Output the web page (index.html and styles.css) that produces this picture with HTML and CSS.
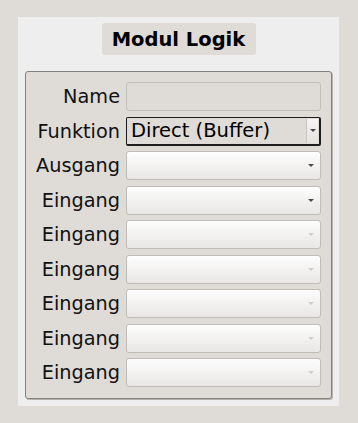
FILE: index.html
```html
<!DOCTYPE html>
<html lang="en">
<head>
  <meta charset="UTF-8">
  <meta name="viewport" content="width=device-width, initial-scale=1.0">
  <title>Modul Logik</title>
  <link rel="stylesheet" href="styles.css">
</head>
<body>
  <!-- Panel -->
  <div class="panel">
    <div class="title">Modul Logik</div>

    <!-- Form group -->
    <div class="group">
      <label class="label">Name</label>
      <div class="field flat"></div>

      <label class="label">Funktion</label>
      <div class="field combo active">
        <span class="value">Direct (Buffer)</span>
        <span class="drop"><span class="arrow"></span></span>
      </div>

      <label class="label">Ausgang</label>
      <div class="field combo"><span class="value"></span><span class="arrow"></span></div>

      <label class="label">Eingang</label>
      <div class="field combo"><span class="value"></span><span class="arrow"></span></div>

      <label class="label">Eingang</label>
      <div class="field combo disabled"><span class="value"></span><span class="arrow"></span></div>

      <label class="label">Eingang</label>
      <div class="field combo disabled"><span class="value"></span><span class="arrow"></span></div>

      <label class="label">Eingang</label>
      <div class="field combo disabled"><span class="value"></span><span class="arrow"></span></div>

      <label class="label">Eingang</label>
      <div class="field combo disabled"><span class="value"></span><span class="arrow"></span></div>

      <label class="label">Eingang</label>
      <div class="field combo disabled"><span class="value"></span><span class="arrow"></span></div>
    </div>
  </div>
</body>
</html>
```

FILE: styles.css
```css
/* General Styles */
* {
  margin: 0;
  padding: 0;
  box-sizing: border-box;
}

body {
  font-family: "DejaVu Sans", sans-serif;
  background-color: #dfdbd7;
  color: #111;
  padding: 17px 19px 17px 18px;
}

.panel {
  background: #eeeeee;
  width: 321px;
  height: 389px;
  padding: 6px 7px 7px 7px;
  display: flex;
  flex-direction: column;
  align-items: center;
}

.title {
  background: #dfdbd7;
  border-radius: 3px;
  width: 154px;
  height: 32px;
  display: flex;
  align-items: center;
  justify-content: center;
  font-weight: bold;
  font-size: 19.5px;
  color: #000;
}

.group {
  margin-top: 16px;
  width: 100%;
  flex: 1;
  background: #dfdbd7;
  border: 1px solid #85817e;
  border-radius: 3px;
  box-shadow: 1px 1px 0 #b8b4b0;
  padding: 10px 10px 11px 0;
  display: grid;
  grid-template-columns: 94px 1fr;
  grid-auto-rows: 29px;
  column-gap: 6px;
  row-gap: 5.5px;
}

.label {
  font-size: 19.3px;
  text-align: right;
  align-self: center;
  white-space: nowrap;
}

.field {
  border: 1px solid #c3bfbb;
  border-radius: 3px;
  height: 29px;
  display: flex;
  align-items: center;
}

.flat {
  background: #dfdbd7;
}

.combo {
  background: linear-gradient(#fdfdfd, #e9e7e5);
  border-color: #c0bcb8;
  padding-left: 5px;
}

.value {
  flex: 1;
  font-size: 19.5px;
  color: #000;
}

.arrow {
  width: 0;
  height: 0;
  border-left: 3px solid transparent;
  border-right: 3px solid transparent;
  border-top: 3px solid #4a4a4a;
  margin-right: 6px;
}

.disabled .arrow {
  border-top-color: #cfcbc8;
}

.active {
  background: #dfdbd7;
  border: 1px solid #1e1e1e;
  border-right-width: 2px;
  border-bottom-width: 2px;
  border-radius: 2px;
  padding-left: 4px;
}

.drop {
  align-self: stretch;
  width: 12px;
  margin: 1px 1px 1px 0;
  background: linear-gradient(#f6f5f4, #e4e1de);
  border-left: 1px solid #c8c4c0;
  display: flex;
  align-items: center;
  justify-content: center;
}

.drop .arrow {
  margin-right: 0;
}
```
